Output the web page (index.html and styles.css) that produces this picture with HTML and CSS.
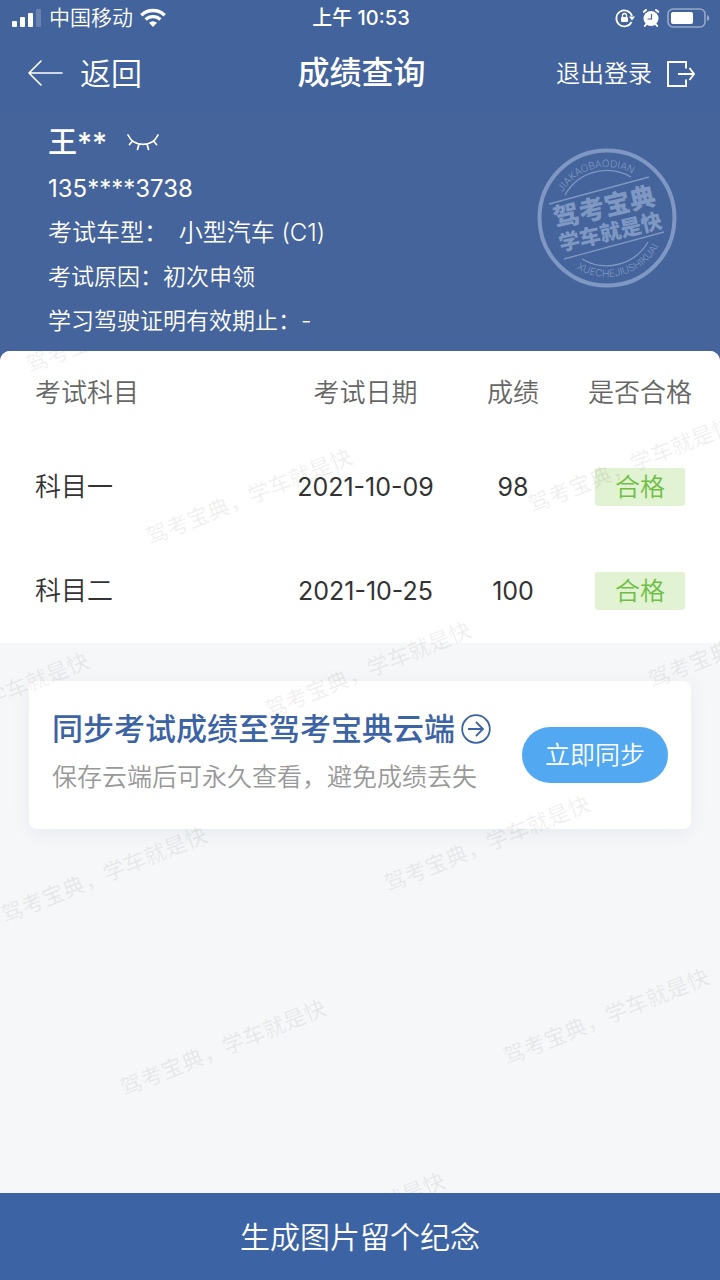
FILE: index.html
```
<!DOCTYPE html>
<html lang="zh-CN">
<head>
  <meta charset="UTF-8">
  <meta name="viewport" content="width=device-width, initial-scale=1">
  <title>成绩查询</title>
  <link rel="stylesheet" href="styles.css">
</head>
<body>
  <header class="header">
    <div class="status">
      <div class="status-left">
        <svg width="30" height="20" viewBox="0 0 30 20" fill="#fff">
          <rect x="0" y="13" width="5" height="6" rx="1"/>
          <rect x="8" y="9" width="5" height="10" rx="1"/>
          <rect x="16" y="5" width="5" height="14" rx="1"/>
          <rect x="24" y="1" width="5" height="18" rx="1" opacity=".2"/>
        </svg>
        <span class="carrier">中国移动</span>
        <svg width="26" height="20" viewBox="0 0 26 20" fill="none" stroke="#fff" stroke-width="3.4">
          <path d="M1.3 7.2a17 17 0 0 1 23.4 0"/>
          <path d="M5.6 11.6a10.8 10.8 0 0 1 14.8 0"/>
          <path d="M9 14.8a6 6 0 0 1 8 0L13 19z" fill="#fff" stroke="none"/>
        </svg>
      </div>
      <div class="time">上午 10:53</div>
      <div class="status-right">
        <svg width="20" height="20" viewBox="0 0 20 20" fill="none" stroke="#fff" stroke-width="1.7">
          <path d="M16.5 14A8 8 0 1 1 17 8"/>
          <path d="M14 8.500h6l-3 4z" fill="#fff" stroke="none"/>
          <rect x="6" y="9" width="7" height="5" rx="1" fill="#fff" stroke="none"/>
          <path d="M7.500 9.500V7.500a2 2 0 0 1 4 0v2" stroke-width="1.300"/>
        </svg>
        <svg width="18" height="20" viewBox="0 0 18 20">
          <circle cx="9" cy="10.500" r="7.500" fill="#fff"/>
          <path d="M1.800 3.800 4 2M16.200 3.800 14 2M4 16.500 2.800 18M14 16.500l1.200 1.500" stroke="#fff" stroke-width="2" stroke-linecap="round"/>
          <path d="M9.500 6v5H5.500" stroke="#42639b" stroke-width="1.200" fill="none"/>
        </svg>
        <svg width="43" height="20" viewBox="0 0 43 20">
          <rect x="1" y="1" width="37" height="18" rx="5" fill="none" stroke="#fff" stroke-width="1.600" opacity=".45"/>
          <rect x="4" y="4" width="22" height="12" rx="2" fill="#fff"/>
          <path d="M40 7c3 .5 3 5.500 0 6z" fill="#fff" opacity=".45"/>
        </svg>
      </div>
    </div>

    <nav class="nav">
      <button class="nav-btn back" type="button">
        <svg width="35" height="28" viewBox="0 0 35 28" fill="none" stroke="#fff" stroke-width="1.600" stroke-linecap="round" stroke-linejoin="round">
          <path d="M34 14H1M13 2 1 14l12 12"/>
        </svg>
        返回
      </button>
      <h1>成绩查询</h1>
      <button class="nav-btn logout" type="button">
        退出登录
        <svg width="28" height="28" viewBox="0 0 28 28" fill="none" stroke="#fff" stroke-width="1.900">
          <path d="M19 8.500V2H1v24h18v-6.500M11 14h16M22.500 8l4.500 6-4.500 6"/>
        </svg>
      </button>
    </nav>

    <div class="profile">
      <div class="name">
        王**
        <button class="eye" type="button" aria-label="显示姓名">
          <svg width="32" height="18" viewBox="0 0 32 18" fill="none" stroke="#fff" stroke-width="1.700" stroke-linecap="round">
            <path d="M1 1c6 12.500 24 12.500 30 0M5.500 7 2.500 10.500M12 10 10.500 15.500M20 10l1.500 5.500M26.500 7l3 3.500"/>
          </svg>
        </button>
      </div>
      <p class="phone">135****3738</p>
      <p class="car">考试车型： <span>小型汽车 (C1)</span></p>
      <p>考试原因：初次申领</p>
      <p>学习驾驶证明有效期止：-</p>

      <svg class="stamp" width="140" height="140" viewBox="0 0 140 140">
        <defs>
          <path id="arc-top" d="M19 70A51 51 0 0 1 121 70"/>
          <path id="arc-bottom" d="M11 70A59 59 0 0 0 129 70"/>
        </defs>
        <circle cx="70" cy="70" r="67.500" fill="none" stroke="#7e98c3" stroke-width="4"/>
        <g fill="none" stroke="#7e98c3" stroke-width="1.300">
          <path d="M28 47A48 48 0 0 1 94 29M45 111A48 48 0 0 0 111 94"/>
          <path d="M12 56 112 29M27 111 127 84"/>
        </g>
        <g transform="rotate(-13 70 70)" fill="#7e98c3">
          <text class="stamp-big" x="70" y="68">驾考宝典</text>
          <text class="stamp-small" x="70" y="92">学车就是快</text>
        </g>
        <g class="stamp-latin" transform="rotate(-15 70 70)">
          <text><textPath href="#arc-top" startOffset="50%">JIAKAOBAODIAN</textPath></text>
          <text><textPath href="#arc-bottom" startOffset="50%">XUECHEJIUSHIKUAI</textPath></text>
        </g>
      </svg>
    </div>
  </header>

  <main class="main">
    <div class="scores">
      <table>
        <thead>
          <tr>
            <th class="subject">考试科目</th>
            <th class="date">考试日期</th>
            <th class="score">成绩</th>
            <th class="result">是否合格</th>
          </tr>
        </thead>
        <tbody>
          <tr>
            <td class="subject">科目一</td>
            <td>2021-10-09</td>
            <td>98</td>
            <td><span class="tag">合格</span></td>
          </tr>
          <tr>
            <td class="subject">科目二</td>
            <td>2021-10-25</td>
            <td>100</td>
            <td><span class="tag">合格</span></td>
          </tr>
        </tbody>
      </table>
    </div>

    <section class="sync">
      <div class="sync-text">
        <h2>
          同步考试成绩至驾考宝典云端
          <svg width="30" height="30" viewBox="0 0 30 30" fill="none" stroke="#3c63a4" stroke-width="1.800">
            <circle cx="15" cy="15" r="13.800"/>
            <path d="M7 15h15M15 8l7 7-7 7"/>
          </svg>
        </h2>
        <p>保存云端后可永久查看，避免成绩丢失</p>
      </div>
      <button class="sync-btn" type="button">立即同步</button>
    </section>

    <!-- watermark -->
    <svg class="watermark" aria-hidden="true">
      <text transform="translate(132 -19) rotate(-22)">驾考宝典，学车就是快</text>
      <text transform="translate(252 153) rotate(-22)">驾考宝典，学车就是快</text>
      <text transform="translate(634 121) rotate(-22)">驾考宝典，学车就是快</text>
      <text transform="translate(-11 357) rotate(-22)">驾考宝典，学车就是快</text>
      <text transform="translate(371 326) rotate(-22)">驾考宝典，学车就是快</text>
      <text transform="translate(754 296) rotate(-22)">驾考宝典，学车就是快</text>
      <text transform="translate(107 531) rotate(-22)">驾考宝典，学车就是快</text>
      <text transform="translate(490 500) rotate(-22)">驾考宝典，学车就是快</text>
      <text transform="translate(226 704) rotate(-22)">驾考宝典，学车就是快</text>
      <text transform="translate(609 673) rotate(-22)">驾考宝典，学车就是快</text>
      <text transform="translate(345 877) rotate(-22)">驾考宝典，学车就是快</text>
    </svg>
  </main>

  <button class="footer-btn" type="button">生成图片留个纪念</button>
</body>
</html>
```
FILE: styles.css
```
* {
  box-sizing: border-box;
}
body {
  margin: 0;
  min-height: 100vh;
  display: flex;
  flex-direction: column;
  background: #45649b;
  color: #333;
  font-family: Inter, "Noto Sans CJK SC", sans-serif;
  font-weight: 350;
  line-height: 1.4;
}
h1, h2, p { margin: 0; }
svg { display: block; flex: none; }
button {
  padding: 0;
  border: none;
  background: none;
  color: #fff;
  font: inherit;
  cursor: pointer;
}

.header { color: #fff; }
.status {
  height: 36px;
  padding: 0 10px 0 12px;
  display: grid;
  grid-template-columns: 1fr auto 1fr;
  align-items: center;
  background: #42639b;
}
.status-left, .status-right {
  display: flex;
  align-items: center;
  gap: 7px;
}
.status-right { justify-content: flex-end; }
.carrier { font-size: 21px; }
.time {
  font-size: 20px;
  font-weight: 500;
}

.nav {
  height: 75px;
  padding: 0 25px 0 28px;
  display: grid;
  grid-template-columns: 1fr auto 1fr;
  align-items: center;
  background: #42639b;
}
.nav h1 {
  font-size: 32px;
  font-weight: 500;
}
.nav-btn {
  display: flex;
  align-items: center;
}
.back {
  gap: 17px;
  font-size: 31px;
}
.logout {
  justify-self: end;
  gap: 15px;
  font-size: 24px;
}

.profile {
  position: relative;
  height: 240px;
  padding: 8px 48px 0;
  font-size: 23px;
  line-height: 44px;
}
.name {
  display: flex;
  align-items: center;
  gap: 20px;
  height: 48px;
  font-size: 29px;
  font-weight: 500;
}
.phone {
  font-size: 24px;
  font-weight: 400;
}
.car { font-size: 24px; }
.car span { margin-left: 4px; }
.stamp {
  position: absolute;
  top: 37px;
  right: 43px;
}
.stamp text { text-anchor: middle; }
.stamp-big {
  font-size: 26px;
  font-weight: 900;
}
.stamp-small {
  font-size: 21px;
  font-weight: 900;
}
.stamp-latin {
  fill: #7e98c3;
  font-size: 10px;
}

.main {
  position: relative;
  flex: 1;
  overflow: hidden;
  border-radius: 10px 10px 0 0;
  background: #f5f7f9;
}
.scores { background: #fff; }
table {
  width: 100%;
  table-layout: fixed;
  border-collapse: collapse;
  text-align: center;
}
th, td {
  height: 104px;
  padding: 0;
  font-size: 25px;
  font-weight: 400;
  line-height: 38px;
}
th {
  height: 84px;
  color: #666;
  font-size: 26px;
  font-weight: 350;
}
.subject {
  padding-left: 35px;
  font-size: 26px;
  font-weight: 350;
  text-align: left;
}
.date { width: 201px; }
.score { width: 94px; }
.result { width: 160px; }
.tag {
  display: block;
  width: 90px;
  margin: 0 auto;
  border-radius: 3px;
  background: #e1f3d2;
  color: #70bf45;
  font-weight: 350;
}

.sync {
  display: flex;
  align-items: center;
  justify-content: space-between;
  height: 148px;
  margin: 38px 29px 0;
  padding: 0 23px;
  border-radius: 8px;
  background: #fff;
  box-shadow: 0 4px 20px rgba(0, 40, 60, 0.06);
}
.sync-text { padding-bottom: 4px; }
.sync h2 {
  display: flex;
  align-items: center;
  gap: 6px;
  color: #3c63a4;
  font-size: 31px;
  font-weight: 500;
  line-height: 48px;
}
.sync p {
  color: #999;
  font-size: 25px;
  line-height: 48px;
}
.sync-btn {
  flex: none;
  width: 146px;
  height: 56px;
  border-radius: 28px;
  background: #52a9f2;
  font-size: 25px;
}

.watermark {
  position: absolute;
  top: 0;
  left: 0;
  width: 100%;
  height: 100%;
  pointer-events: none;
}
.watermark text {
  fill: rgba(0, 0, 0, 0.06);
  font-size: 22px;
  font-weight: 500;
  text-anchor: middle;
}

.footer-btn {
  height: 87px;
  background: #3c63a4;
  font-size: 30px;
}
```
